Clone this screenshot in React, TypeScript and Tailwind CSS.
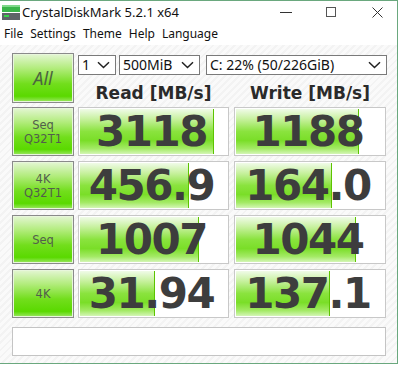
import React from "react";

const rows = [
  { l1: "Seq", l2: "Q32T1", read: "3118", rf: 134, write: "1188", wf: 123 },
  { l1: "4K", l2: "Q32T1", read: "456.9", rf: 109, write: "164.0", wf: 96 },
  { l1: "Seq", l2: "", read: "1007", rf: 119, write: "1044", wf: 120 },
  { l1: "4K", l2: "", read: "31.94", rf: 75, write: "137.1", wf: 94 },
];

function Chevron() {
  return (
    <svg width="13" height="8" viewBox="0 0 13 8" className="shrink-0">
      <path d="M1 1.2 L6.5 6.5 L12 1.2" fill="none" stroke="#222" strokeWidth="1.5" />
    </svg>
  );
}

function Select({ text, w }: { text: string; w: string }) {
  return (
    <div className={`${w} h-[20px] border border-[#7a7a7a] bg-white flex items-center justify-between pl-[3px] pr-[5px] text-[14px] text-[#111] leading-none`}>
      <span>{text}</span>
      <Chevron />
    </div>
  );
}

function Cell({ value, fill, w }: { value: string; fill: number; w: string }) {
  return (
    <div className={`${w} h-[49px] relative border border-[#c8c8c8] bg-white flex items-center justify-center pr-[4px]`}>
      <div
        className="absolute top-[1px] bottom-[1px] left-[1px] border-r border-[#5cc400] bg-[linear-gradient(to_bottom,#f0fbe8_0%,#c8f1a0_22%,#8ae33e_50%,#7ade28_70%,#a4ea66_88%,#d4f6b6_100%)]"
        style={{ width: fill }}
      />
      <span className="relative font-['DejaVu_Sans',sans-serif] font-bold text-[42px] tracking-[-1.5px] text-[#3d3d3d] leading-none">
        {value}
      </span>
    </div>
  );
}

const btn =
  "border border-[#8a8a8a] shadow-[inset_0_0_0_1px_#e8f6dc] bg-[linear-gradient(to_bottom,#e4f6d4_0%,#b2ec7c_30%,#72de1c_62%,#5ad900_88%,#9ee866_100%)]";

function Label({ l1, l2 }: { l1: string; l2: string }) {
  return (
    <div className={`w-[62px] h-[49px] ${btn} flex flex-col items-center justify-center text-[11.5px] text-[#525e4c] leading-[14px] font-['DejaVu_Sans',sans-serif]`}>
      <span>{l1}</span>
      {l2 && <span>{l2}</span>}
    </div>
  );
}

export default function App() {
  return (
    <div className="w-[400px] h-[367px] bg-white font-['Noto_Sans',sans-serif]">
      <div className="w-[398px] h-[364px] border-t border-r border-b border-[#6aa87e] flex flex-col">
        <div className="h-[22px] shrink-0 bg-white flex items-center relative">
          <svg width="18" height="15" viewBox="0 0 18 15" className="ml-[2px]">
            <rect x="0" y="0" width="18" height="7" fill="#3ab54a" />
            <rect x="0" y="0" width="18" height="2" fill="#7fd88a" />
            <rect x="0" y="8" width="18" height="7" fill="#5e6468" />
            <rect x="2" y="10" width="5" height="2" fill="#3ad14a" />
          </svg>
          <span className="ml-[2px] text-[13px] text-[#111] leading-none">CrystalDiskMark 5.2.1 x64</span>
          <div className="ml-auto flex items-center">
            <div className="w-[12px] h-[1px] bg-[#333] mr-[34px]" />
            <div className="w-[10px] h-[10px] border border-[#555] mr-[36px]" />
            <svg width="11" height="11" viewBox="0 0 11 11" className="mr-[14px]">
              <path d="M0.5 0.5 L10.5 10.5 M10.5 0.5 L0.5 10.5" stroke="#333" strokeWidth="1" />
            </svg>
          </div>
        </div>
        <div className="h-[22px] shrink-0 bg-white flex items-center text-[12px] text-[#111] leading-none pl-[4px] gap-[7px]">
          <span>File</span>
          <span>Settings</span>
          <span>Theme</span>
          <span>Help</span>
          <span>Language</span>
        </div>
        <div className="flex-1 pl-[12px] pt-[8px] bg-[repeating-linear-gradient(135deg,#f3f3f3_0px,#f3f3f3_2px,#fafafa_2px,#fafafa_5px)]">
          <div className="flex">
            <div className={`w-[62px] h-[50px] ${btn} flex items-center justify-center text-[18px] italic text-[#4c6440]`}>
              All
            </div>
            <div className="ml-[4px] flex flex-col">
              <div className="flex mt-[2px]">
                <Select text="1" w="w-[38px]" />
                <div className="ml-[3px]"><Select text="500MiB" w="w-[81px]" /></div>
                <div className="ml-[6px]"><Select text="C: 22% (50/226GiB)" w="w-[181px]" /></div>
              </div>
              <div className="flex mt-[8px] font-['DejaVu_Sans',sans-serif] font-bold text-[17px] text-[#2a2a2a] leading-[20px]">
                <div className="w-[151px] text-center">Read [MB/s]</div>
                <div className="ml-[5px] w-[152px] text-center">Write [MB/s]</div>
              </div>
            </div>
          </div>
          <div className="mt-[4px] flex flex-col gap-[5px]">
            {rows.map((r, i) => (
              <div key={i} className="flex">
                <Label l1={r.l1} l2={r.l2} />
                <div className="ml-[4px]"><Cell value={r.read} fill={r.rf} w="w-[151px]" /></div>
                <div className="ml-[5px]"><Cell value={r.write} fill={r.wf} w="w-[152px]" /></div>
              </div>
            ))}
          </div>
          <div className="mt-[9px] w-[374px] h-[29px] border border-[#c4c4c4] bg-white" />
        </div>
      </div>
    </div>
  );
}
